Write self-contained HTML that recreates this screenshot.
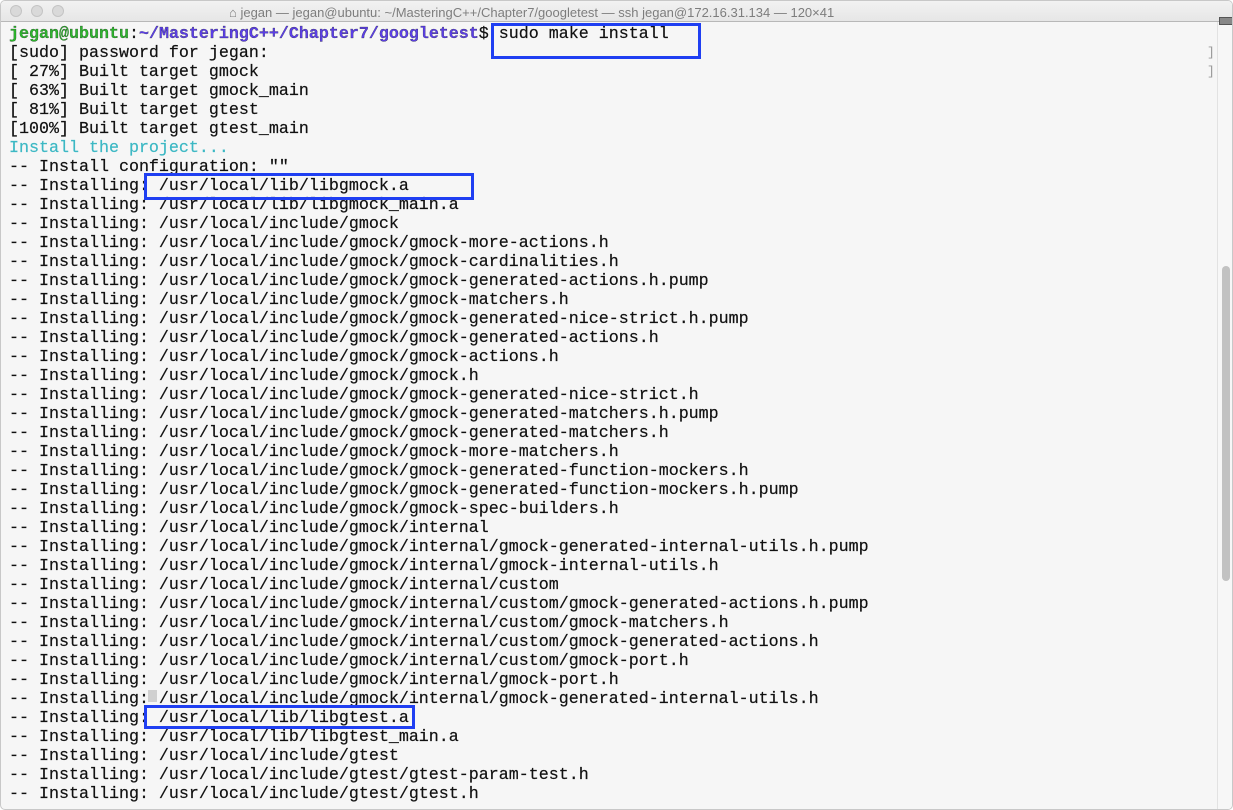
<!DOCTYPE html>
<html><head><meta charset="utf-8"><style>
*{margin:0;padding:0;box-sizing:border-box}
body{width:1233px;height:810px;background:#fff;overflow:hidden;position:relative;font-family:"Liberation Mono",monospace}
.win{position:absolute;left:0;top:0;width:1233px;height:810px;border:1px solid #c8c8c8;border-radius:5px;background:#f6f6f6;overflow:hidden}
.tb{position:absolute;left:0;top:0;width:100%;height:21px;background:linear-gradient(#f2f2f2,#e6e6e6);border-bottom:1px solid #b8b8b8}
.dot{position:absolute;top:4px;width:12px;height:12px;border-radius:50%;background:#d9d9d9;border:1px solid #c4c4c4}
.title{position:absolute;left:228px;top:4px;font:13px "Liberation Sans",sans-serif;color:#7d7d7d;white-space:nowrap}
pre{position:absolute;left:8px;top:24px;font-size:16.67px;line-height:19px;color:#111;font-family:"Liberation Mono",monospace;-webkit-text-stroke:0.2px #111}
.g{color:#2db52d;font-weight:bold}.p{color:#5b3fe6;font-weight:bold}.c{color:#3cb8c4;-webkit-text-stroke:0.2px #3cb8c4}
.box{position:absolute;border:3px solid #1f3ff2}
.sb{position:absolute;left:1216px;top:21px;width:16px;height:789px;background:#f7f7f7;border-left:1px solid #e2e2e2}
.th{position:absolute;left:1221px;top:265px;width:8px;height:315px;border-radius:4px;background:#c2c2c2}
</style></head><body><div class="win">
<div class="tb">
<div class="dot" style="left:9px"></div><div class="dot" style="left:30px"></div><div class="dot" style="left:51px"></div>
<div class="title">⌂ jegan — jegan@ubuntu: ~/MasteringC++/Chapter7/googletest — ssh jegan@172.16.31.134 — 120×41</div>
</div>
<div class="sb"></div><div class="th"></div>
<div style="position:absolute;left:1218px;top:16px;width:14px;height:8px;background:#888;border:1px solid #555"></div>
<div style="position:absolute;left:1206px;top:44px;font-size:13px;color:#999">]</div>
<div style="position:absolute;left:1206px;top:63px;font-size:13px;color:#999">]</div>
<div style="position:absolute;left:147px;top:689px;width:9px;height:12px;background:#d0d0d0"></div>
<pre><span class="g">jegan@ubuntu</span>:<span class="p">~/MasteringC++/Chapter7/googletest</span>$ sudo make install
[sudo] password for jegan:
[ 27%] Built target gmock
[ 63%] Built target gmock_main
[ 81%] Built target gtest
[100%] Built target gtest_main
<span class="c">Install the project...</span>
-- Install configuration: ""
-- Installing: /usr/local/lib/libgmock.a
-- Installing: /usr/local/lib/libgmock_main.a
-- Installing: /usr/local/include/gmock
-- Installing: /usr/local/include/gmock/gmock-more-actions.h
-- Installing: /usr/local/include/gmock/gmock-cardinalities.h
-- Installing: /usr/local/include/gmock/gmock-generated-actions.h.pump
-- Installing: /usr/local/include/gmock/gmock-matchers.h
-- Installing: /usr/local/include/gmock/gmock-generated-nice-strict.h.pump
-- Installing: /usr/local/include/gmock/gmock-generated-actions.h
-- Installing: /usr/local/include/gmock/gmock-actions.h
-- Installing: /usr/local/include/gmock/gmock.h
-- Installing: /usr/local/include/gmock/gmock-generated-nice-strict.h
-- Installing: /usr/local/include/gmock/gmock-generated-matchers.h.pump
-- Installing: /usr/local/include/gmock/gmock-generated-matchers.h
-- Installing: /usr/local/include/gmock/gmock-more-matchers.h
-- Installing: /usr/local/include/gmock/gmock-generated-function-mockers.h
-- Installing: /usr/local/include/gmock/gmock-generated-function-mockers.h.pump
-- Installing: /usr/local/include/gmock/gmock-spec-builders.h
-- Installing: /usr/local/include/gmock/internal
-- Installing: /usr/local/include/gmock/internal/gmock-generated-internal-utils.h.pump
-- Installing: /usr/local/include/gmock/internal/gmock-internal-utils.h
-- Installing: /usr/local/include/gmock/internal/custom
-- Installing: /usr/local/include/gmock/internal/custom/gmock-generated-actions.h.pump
-- Installing: /usr/local/include/gmock/internal/custom/gmock-matchers.h
-- Installing: /usr/local/include/gmock/internal/custom/gmock-generated-actions.h
-- Installing: /usr/local/include/gmock/internal/custom/gmock-port.h
-- Installing: /usr/local/include/gmock/internal/gmock-port.h
-- Installing: /usr/local/include/gmock/internal/gmock-generated-internal-utils.h
-- Installing: /usr/local/lib/libgtest.a
-- Installing: /usr/local/lib/libgtest_main.a
-- Installing: /usr/local/include/gtest
-- Installing: /usr/local/include/gtest/gtest-param-test.h
-- Installing: /usr/local/include/gtest/gtest.h</pre>
<div class="box" style="left:490px;top:22px;width:210px;height:36px"></div>
<div class="box" style="left:143px;top:172px;width:330px;height:27px"></div>
<div class="box" style="left:143px;top:704px;width:271px;height:24px"></div>
</div></body></html>
